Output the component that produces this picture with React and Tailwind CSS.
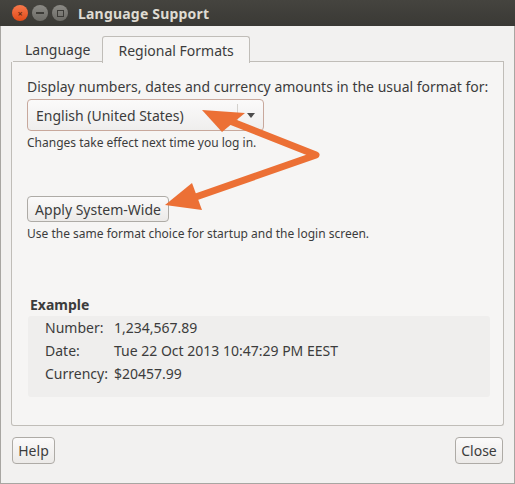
export default function App() {
  const font = { fontFamily: '"Noto Sans", "DejaVu Sans", sans-serif' };
  return (
    <div className="relative w-[515px] h-[484px] bg-[#f2f1f0] text-[#3c3c3c] overflow-hidden" style={font}>
      {/* Title bar */}
      <div className="h-[26px] bg-gradient-to-b from-[#45443f] to-[#3a3935] flex items-center pl-[12px]">
        <div className="flex items-center gap-[4px]">
          <div className="w-[16px] h-[16px] rounded-full bg-gradient-to-b from-[#f7784a] to-[#df4a16] flex items-center justify-center text-[#6b2a10] text-[9px] leading-none font-bold">×</div>
          <div className="w-[16px] h-[16px] rounded-full bg-gradient-to-b from-[#8b8a85] to-[#6c6b66] flex items-center justify-center">
            <div className="w-[8px] h-[2px] bg-[#3c3b37]" />
          </div>
          <div className="w-[16px] h-[16px] rounded-full bg-gradient-to-b from-[#8b8a85] to-[#6c6b66] flex items-center justify-center">
            <div className="w-[7px] h-[7px] border border-[#3c3b37]" />
          </div>
        </div>
        <div className="ml-[10px] text-[14px] font-bold text-[#dfdbd2] tracking-[0.2px]">Language Support</div>
      </div>

      {/* Body */}
      <div className="border-x border-b border-[#a8a6a2] h-[458px] flex flex-col px-[10px]">
        {/* Tabs */}
        <div className="flex items-end h-[36px] pl-[2px]">
          <div className="h-[24px] px-[12px] flex items-center text-[14px] text-[#3c3c3c] border-b border-[#c0bdb8]">Language</div>
          <div className="h-[27px] px-[15px] flex items-center text-[14px] bg-[#f6f5f4] border border-b-0 border-[#c0bdb8] rounded-t-[3px] -mb-px relative z-10">Regional Formats</div>
          <div className="flex-1 border-b border-[#c0bdb8] h-px" />
        </div>
        {/* Panel */}
        <div className="h-[364px] bg-[#f6f5f4] border border-t-0 border-[#c0bdb8] rounded-b-[3px] px-[15px] pt-[16px] flex flex-col">
          <div className="text-[14px] leading-[18px] whitespace-nowrap">Display numbers, dates and currency amounts in the usual format for:</div>
          <div className="mt-[3px] w-[237px] h-[32px] border border-[#c8a89c] rounded-[4px] bg-gradient-to-b from-[#fbfafa] to-[#efeeed] flex items-center">
            <div className="flex-1 pl-[8px] text-[14px]">English (United States)</div>
            <div className="w-px h-[22px] bg-[#d4d1cd]" />
            <div className="w-[25px] flex items-center justify-center">
              <svg width="8" height="5" viewBox="0 0 8 5"><path d="M0 0 L8 0 L4 5 Z" fill="#4c4c4c" /></svg>
            </div>
          </div>
          <div className="mt-[4px] text-[12px] leading-[16px]">Changes take effect next time you log in.</div>

          <div className="mt-[45px] w-[142px] h-[26px] border border-[#aeaba6] rounded-[4px] bg-gradient-to-b from-[#fbfafa] to-[#eceae8] flex items-center justify-center text-[14px]">Apply System-Wide</div>
          <div className="mt-[4px] text-[12px] leading-[16px]">Use the same format choice for startup and the login screen.</div>

          <div className="mt-[54px] pl-[3px] text-[14px] font-bold leading-[18px]">Example</div>
          <div className="mt-[2px] ml-[1px] w-[462px] h-[81px] bg-[#efeeed] rounded-[3px] pl-[17px] flex flex-col text-[14px]">
            <div className="flex h-[23px] items-center"><div className="w-[69px]">Number:</div><div>1,234,567.89</div></div>
            <div className="flex h-[23px] items-center"><div className="w-[69px]">Date:</div><div>Tue 22 Oct 2013 10:47:29 PM EEST</div></div>
            <div className="flex h-[23px] items-center"><div className="w-[69px]">Currency:</div><div>$20457.99</div></div>
          </div>
        </div>

        {/* Bottom buttons */}
        <div className="flex justify-between mt-[11px] px-[1px]">
          <div className="w-[43px] h-[27px] border border-[#aeaba6] rounded-[4px] bg-gradient-to-b from-[#fbfafa] to-[#eceae8] flex items-center justify-center text-[14px]">Help</div>
          <div className="w-[48px] h-[27px] border border-[#aeaba6] rounded-[4px] bg-gradient-to-b from-[#fbfafa] to-[#eceae8] flex items-center justify-center text-[14px]">Close</div>
        </div>
      </div>

      {/* Annotation arrows */}
      <svg className="absolute left-0 top-0 pointer-events-none" width="515" height="484" viewBox="0 0 515 484">
        <polyline points="230,121 316,155 190,199" fill="none" stroke="#ec7035" strokeWidth="7" strokeLinejoin="round" strokeLinecap="round" />
        <polygon points="202,110 245,113 222,132" fill="#ec7035" />
        <polygon points="165,205 192,183 202,210" fill="#ec7035" />
      </svg>
    </div>
  );
}
